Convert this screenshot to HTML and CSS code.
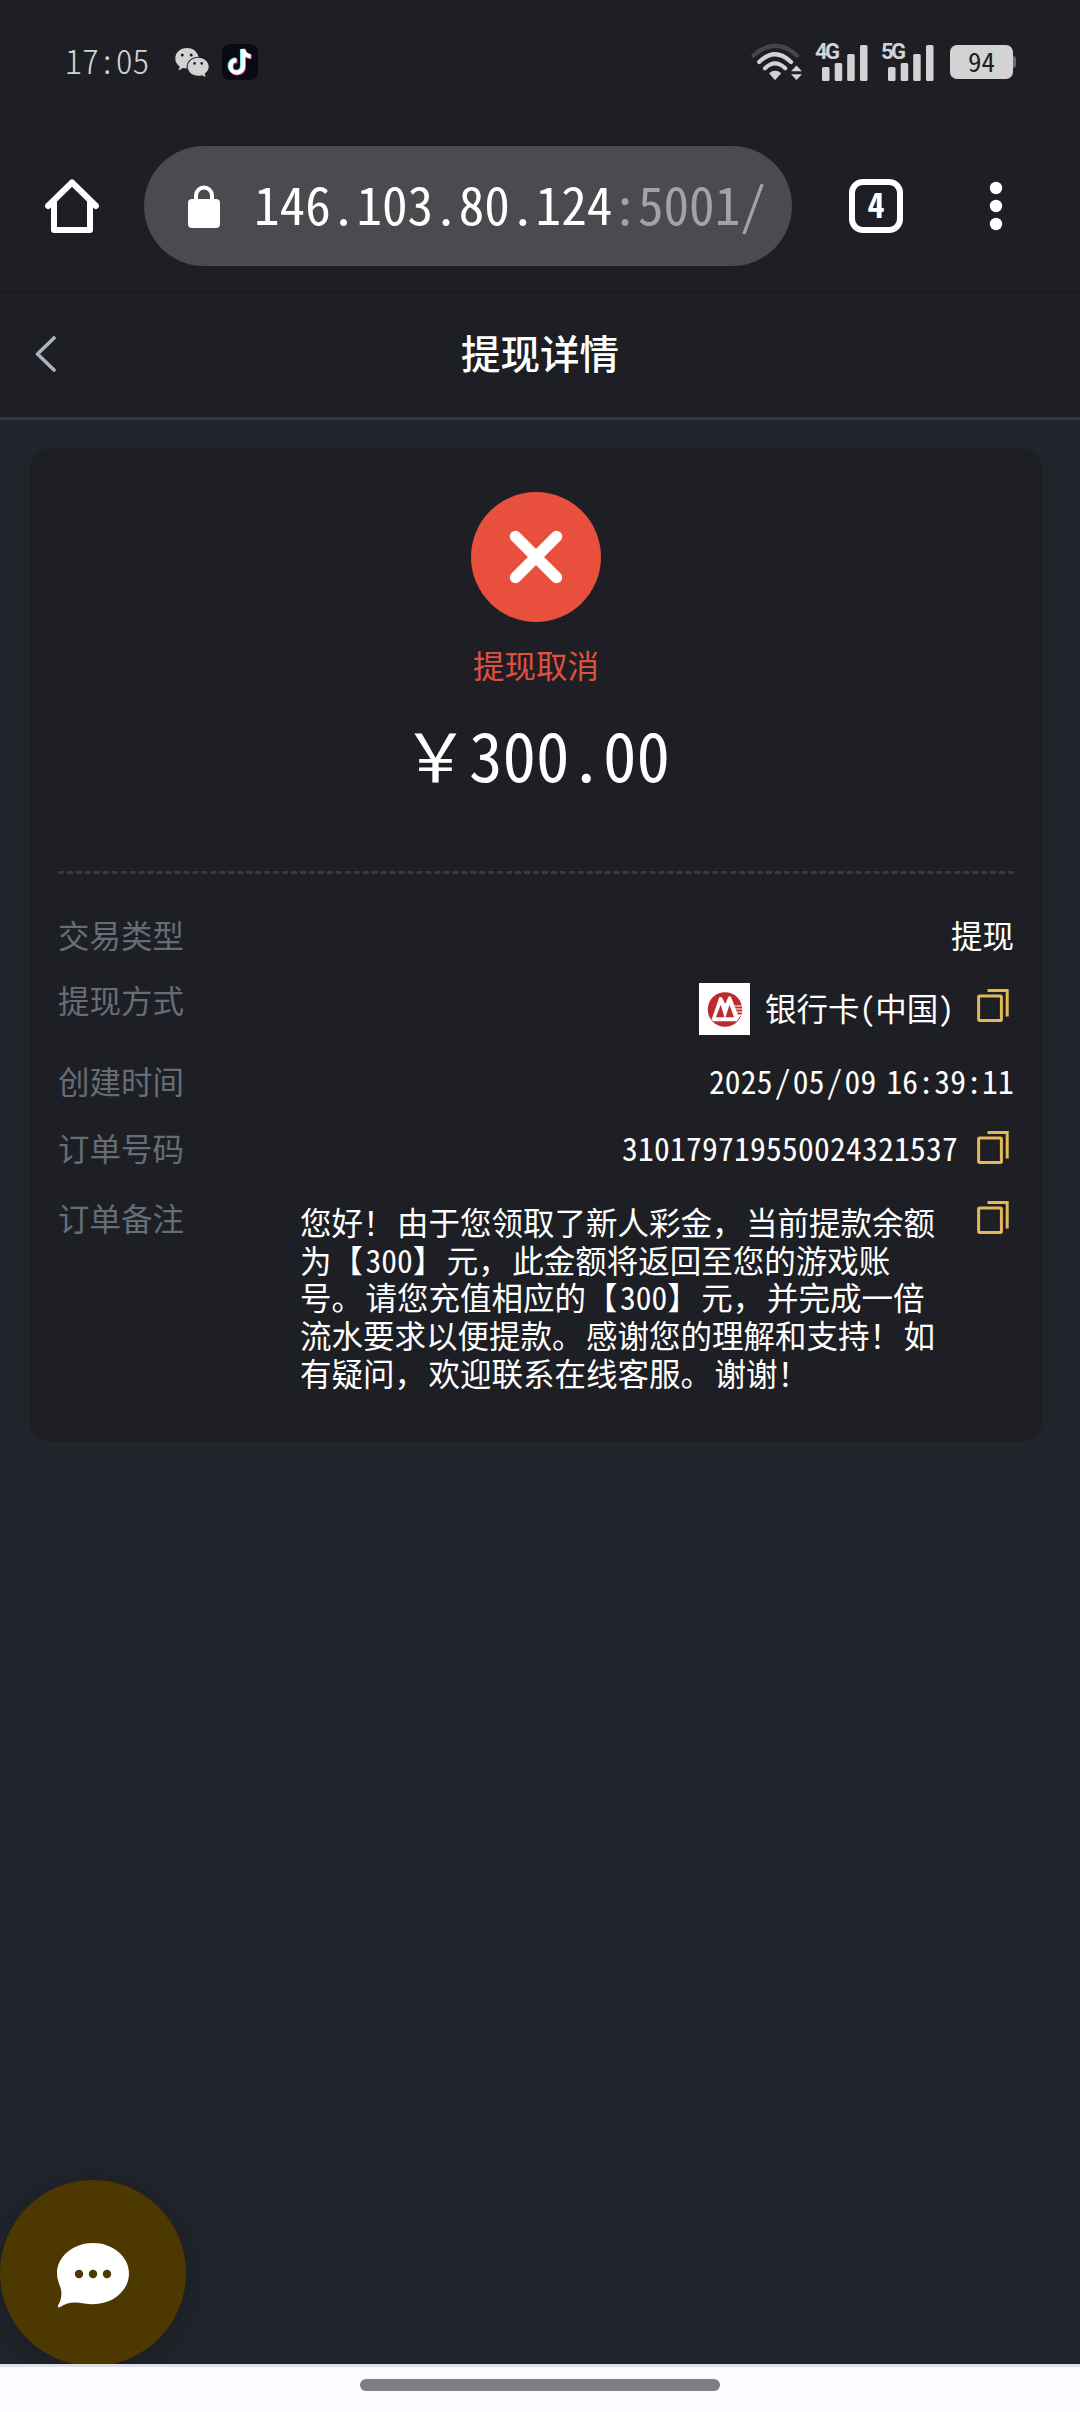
FILE: index.html
```html
<!DOCTYPE html>
<html lang="zh-CN">
<head>
<meta charset="utf-8">
<title>提现详情</title>
<link rel="stylesheet" href="styles.css">
</head>
<body>
<svg class="defs" width="0" height="0" aria-hidden="true">
  <symbol id="copy" viewBox="0 0 32 33">
    <rect x="1.6" y="7" width="22.8" height="24.4" rx="1"/>
    <path d="M10.5 1.6H30.2V27.6"/>
  </symbol>
</svg>
<div class="screen">
  <div class="status">
    <span class="clock">17:05</span>
    <svg class="wechat" width="34" height="30" viewBox="0 0 34 30">
      <path fill="#d3d3d4" d="M12 1C5.300 1 .3 5.600.3 11.500c0 3.400 1.700 6.200 4.400 8.100l-1.200 4 4.600-2.500c1.100.3 2.400.5 3.700.5C10.700 15 16 9.900 23.600 9.800 22.300 4.400 17.600 1 12 1z"/>
      <path fill="#d3d3d4" d="M23.200 10.800c-5.900 0-10.500 4-10.500 9s4.600 9 10.500 9c1.400 0 2.600-.2 3.800-.6l3.600 1.700-.9-3.300c2.400-1.700 4-4.100 4-6.800 0-5-4.600-9-10.500-9z"/>
      <g fill="#1e1f24"><circle cx="7.300" cy="8" r="1.500"/><circle cx="16.200" cy="8" r="1.500"/><circle cx="19.600" cy="16.400" r="1.300"/><circle cx="26.700" cy="16.400" r="1.300"/></g>
    </svg>
    <svg class="tiktok" width="36" height="36" viewBox="0 0 36 36">
      <rect width="36" height="36" rx="8" fill="#090a15"/>
      <g fill="none" stroke-width="4.300">
        <path stroke="#5ee9e2" d="M13.500 15.500a6.200 6.200 0 1 0 6.600 6.200V5c.6 3.900 3.200 6.300 7.400 6.600"/>
        <path stroke="#ee3a5e" d="M15.500 17a6.200 6.200 0 1 0 6.400 6.200V6c.6 3.900 3.300 6.600 7.800 7"/>
        <path stroke="#fff" d="M14.600 16.200a6.200 6.200 0 1 0 6.400 6.200V5.200c.6 3.900 3.200 6.800 7.700 7.200"/>
      </g>
    </svg>
    <svg class="wifi" width="52" height="38" viewBox="0 0 52 38">
      <g fill="none" stroke="#d3d3d4" stroke-width="4.200" stroke-linecap="round">
        <path stroke="#45464a" d="M2.500 12.500Q24 -7 46 12.500"/>
        <path d="M8.200 19Q24 3.500 40 19"/>
        <path d="M14 25.300Q24 15.500 34.300 25.300"/>
      </g>
      <path fill="#d3d3d4" d="M18 30.200Q24 25.500 30.200 30.200L24 37.300z"/>
      <path fill="#d3d3d4" d="M45.500 22.500l5.500 5.700H40zM45.500 37l-5.500-5.700h11z"/>
    </svg>
    <div class="signal">
      <span>4G</span>
      <svg width="46" height="37" viewBox="0 0 46 37" fill="#d3d3d4"><rect y="23" width="7.500" height="14" rx="1.500"/><rect x="12.700" y="19" width="7.500" height="18" rx="1.500"/><rect x="25.200" y="10" width="7.500" height="27" rx="1.500"/><rect x="38" y="1" width="7.500" height="36" rx="1.500"/></svg>
    </div>
    <div class="signal">
      <span>5G</span>
      <svg width="46" height="37" viewBox="0 0 46 37" fill="#d3d3d4"><rect y="23" width="7.500" height="14" rx="1.500"/><rect x="12.700" y="19" width="7.500" height="18" rx="1.500"/><rect x="25.200" y="10" width="7.500" height="27" rx="1.500"/><rect x="38" y="1" width="7.500" height="36" rx="1.500"/></svg>
    </div>
    <div class="battery">94</div>
    <div class="nub"></div>
  </div>

  <div class="toolbar">
    <svg class="home" width="54" height="54" viewBox="0 0 54 54" fill="none" stroke="#fff" stroke-width="6" stroke-linecap="round" stroke-linejoin="round">
      <path d="M3 27L27 3.500 51 27M9 23v28h36V23"/>
    </svg>
    <div class="url">
      <svg width="32" height="43" viewBox="0 0 32 43">
        <rect y="14" width="32" height="29" rx="4" fill="#fff"/>
        <path d="M8 16V10.500a8 8 0 0 1 16 0V16" fill="none" stroke="#fff" stroke-width="4"/>
      </svg>
      <span class="address">146.103.80.124<em>:5001/</em></span>
    </div>
    <div class="tabs">4</div>
    <svg class="more" width="14" height="50" viewBox="0 0 14 50" fill="#fff"><circle cx="7" cy="7" r="6.200"/><circle cx="7" cy="25" r="6.200"/><circle cx="7" cy="43" r="6.200"/></svg>
  </div>

  <header class="header">
    <svg width="22" height="36" viewBox="0 0 22 36" fill="none" stroke="#adb3be" stroke-width="3.600" stroke-linecap="round" stroke-linejoin="round"><path d="M19 2L2.500 18 19 34"/></svg>
    <h1>提现详情</h1>
  </header>

  <main class="content">
    <section class="card">
      <svg class="cancel" width="130" height="130" viewBox="0 0 130 130">
        <circle cx="65" cy="65" r="65" fill="#e94f3d"/>
        <path d="M44.500 44.500l41 41M85.500 44.500l-41 41" stroke="#fff" stroke-width="11.500" stroke-linecap="round"/>
      </svg>
      <p class="state">提现取消</p>
      <p class="amount"><span class="full">￥</span>300.00</p>
      <div class="divider"></div>
      <div class="row type"><span class="label">交易类型</span><span class="value">提现</span></div>
      <div class="row method">
        <span class="label">提现方式</span>
        <span class="value">
          <svg class="bank" width="51" height="52" viewBox="0 0 51 52">
            <rect width="51" height="52" fill="#fff"/>
            <circle cx="26" cy="26.500" r="17.300" fill="#bf2a2f"/>
            <path fill="#fff" d="M12.500 36.800L20.300 14.200h2.600L26.200 21l3.300-7.600h2.400l7.200 18.800 3-.4-4.300 6.500H14.500z"/>
            <path fill="#bf2a2f" d="M17 34.300l4.700-12.600 3.800 12.600zM26.500 34.300l4-12.600 4.500 12.600z"/>
            <path stroke="#fff" stroke-width="1.200" d="M35 23h9M36 26h8M37 29h7M38 32h6"/>
          </svg>
          <span class="bank-name">银行卡(中国)</span>
          <svg class="copy" width="32" height="33"><use href="#copy"/></svg>
        </span>
      </div>
      <div class="row time"><span class="label">创建时间</span><span class="value">2025<i>/</i>05<i>/</i>09 16:39:11</span></div>
      <div class="row number"><span class="label">订单号码</span><span class="value">310179719550024321537<svg class="copy" width="32" height="33"><use href="#copy"/></svg></span></div>
      <div class="row note">
        <span class="label">订单备注</span>
        <p class="message">您好<i>！</i>由于您领取了新人彩金<i>，</i>当前提款余额<br>为<i>【</i>300<i>】</i>元<i>，</i>此金额将返回至您的游戏账<br>号<i>。</i>请您充值相应的<i>【</i>300<i>】</i>元<i>，</i>并完成一倍<br>流水要求以便提款<i>。</i>感谢您的理解和支持<i>！</i>如<br>有疑问<i>，</i>欢迎联系在线客服<i>。</i>谢谢<i>！</i></p>
        <svg class="copy" width="32" height="33"><use href="#copy"/></svg>
      </div>
    </section>
    <div class="chat">
      <svg width="72" height="65" viewBox="0 0 72 65">
        <path fill="#fff" d="M36 0C16 0 0 13.500 0 30.500c0 6 2.500 10.500 4 16 1 5.500 0 11-2.800 15.500-1 2 .3 3 2 2 4-2.500 8.800-4.500 14.800-4.400 6 .2 12 1.600 18 1.600 20 0 36-13.700 36-30.700S56 0 36 0z"/>
        <g fill="#4d3800"><circle cx="22" cy="31" r="4.200"/><circle cx="36" cy="31" r="4.200"/><circle cx="50" cy="31" r="4.200"/></g>
      </svg>
    </div>
  </main>
  <div class="gesture"><div class="pill"></div></div>
</div>
</body>
</html>
```
FILE: styles.css
```css
* { box-sizing: border-box; margin: 0; padding: 0; }
body {
  background: #20242b;
  color: #fff;
  font-family: "Noto Sans CJK SC", sans-serif;
  font-feature-settings: "hwid";
  font-size: 31.5px;
}
svg { display: block; flex: none; }
.defs { position: absolute; }
.screen { width: 1080px; height: 2412px; display: flex; flex-direction: column; }

.status {
  height: 124px;
  padding-left: 65px;
  display: flex;
  align-items: center;
  background: #1e1f24;
  color: #d3d3d4;
}
.clock { width: 110px; font-size: 33.8px; font-weight: 300; line-height: 40px; padding-bottom: 4px; }
.wechat { margin-right: 13px; }
.wifi { margin: 0 13px 0 auto; }
.signal { width: 52px; margin-right: 14px; position: relative; padding-left: 6px; }
.signal span {
  position: absolute;
  left: -1px;
  top: -3px;
  font: 700 22px/22px Roboto, sans-serif;
  letter-spacing: -2.5px;
}
.battery {
  width: 63px;
  height: 34px;
  margin-left: 2px;
  border-radius: 7px;
  background: #d3d3d4;
  color: #1e1f24;
  font-size: 27px;
  line-height: 31px;
  text-align: center;
}
.nub { width: 3px; height: 12px; margin-right: 64px; border-radius: 0 3px 3px 0; background: #6a6b6e; }

.toolbar {
  height: 169px;
  padding: 0 77px 2px 45px;
  display: flex;
  align-items: center;
  background: #1e1f24;
  border-bottom: 3px solid #1b1c20;
}
.url {
  width: 648px;
  height: 120px;
  margin: 0 57px 0 45px;
  padding-left: 44px;
  display: flex;
  align-items: center;
  gap: 34px;
  border-radius: 60px;
  background: #4a4b4e;
}
.address { font-size: 51.2px; line-height: 70px; padding-bottom: 6px; white-space: nowrap; }
.address em { font-style: normal; color: #a2a3a5; }
.tabs {
  width: 54px;
  height: 54px;
  border: 6px solid #fff;
  border-radius: 14px;
  font-size: 34px;
  font-weight: 700;
  line-height: 38px;
  text-align: center;
}
.more { margin-left: auto; }

.header {
  height: 127px;
  padding: 0 0 3px 35px;
  display: flex;
  align-items: center;
  background: #1e1f24;
  border-bottom: 3px solid #343741;
}
.header h1 { flex: 1; padding: 0 57px 3px 0; text-align: center; font-size: 39.5px; font-weight: 500; line-height: 58px; }

.content { flex: 1; position: relative; overflow: hidden; padding: 28px 37px 0 29px; }
.card { height: 994px; padding: 44px 29px 0; border-radius: 22px; background: #1e1f24; }
.cancel { margin: 0 auto; }
.state { margin-top: 19px; color: #e0503f; text-align: center; line-height: 46px; font-weight: 400; }
.amount { margin-top: 18px; text-align: center; font-size: 67px; line-height: 96px; }
.full { font-feature-settings: normal; }
.divider { margin-top: 70px; border-top: 3px dashed #353b45; }

.row { display: flex; justify-content: space-between; line-height: 48px; }
.label { color: #676d77; }
.value { display: flex; align-items: center; }
.copy { fill: none; stroke: #e3b857; stroke-width: 3px; margin-right: 5px; }
.type { margin-top: 36px; }
.method { margin-top: 17px; height: 60px; }
.method .value { height: 52px; margin-top: 8px; }
.bank { margin-right: 15px; }
.bank-name { margin-right: 23px; padding-bottom: 4px; }
.method .copy { margin-bottom: 7px; }
.time { margin-top: 21px; }
.time .value { display: block; letter-spacing: .2px; word-spacing: -6px; }
.time i { font-style: normal; padding: 0 2px; }
.number { margin-top: 19px; }
.number .value { letter-spacing: .25px; }
.number .copy { margin-left: 19px; }
.note { margin-top: 22px; justify-content: flex-start; }
.note .label { width: 242px; }
.message { width: 677px; margin-top: 10px; line-height: 37.7px; white-space: nowrap; }
.message i { font-style: normal; font-feature-settings: normal; letter-spacing: 2.5px; }
.note .copy { margin-top: 8px; }

.chat {
  position: absolute;
  left: 0;
  bottom: -2px;
  width: 186px;
  height: 186px;
  display: flex;
  align-items: center;
  justify-content: center;
  padding-top: 5px;
  border-radius: 50%;
  background: #4d3800;
  box-shadow: 0 6px 30px rgba(0, 0, 0, .2);
}
.gesture { height: 48px; padding-top: 12px; background: #fdfbff; border-top: 3px solid #dfe0ea; }
.pill { width: 360px; height: 12px; margin: 0 auto; border-radius: 6px; background: #7e7d80; }
```
